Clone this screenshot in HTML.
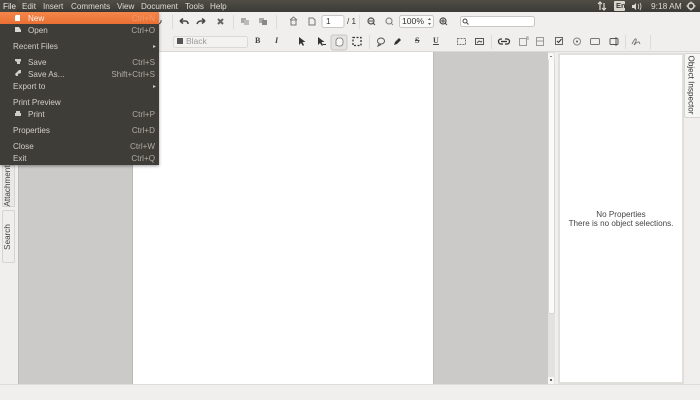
<!DOCTYPE html>
<html><head><meta charset="utf-8"><style>
html,body{margin:0;padding:0;background:#f0efed}
#r{position:relative;width:700px;height:400px;overflow:hidden;background:#f0efed;font-family:"Liberation Sans",sans-serif;font-size:8.1px;filter:blur(.35px)}
.a{position:absolute}
.t{position:absolute;white-space:nowrap;line-height:14px;height:14px}
.top{color:#dedbd3;top:0}
.m{color:#d2cfc7;left:13px}
.i{left:28px}
.k{color:#aeaba3;right:545px}
svg{position:absolute;left:0;top:0}
.sep{position:absolute;width:1px;height:14px;background:#dcdbd8}
</style></head><body><div id="r">
<div class="a" style="left:0;top:0;width:700px;height:12px;background:linear-gradient(#504d46,#3c3b37)"></div>
<div class="a" style="left:0;top:12px;width:700px;height:40px;background:#f0efed"></div>
<div class="a" style="left:0;top:51px;width:700px;height:1px;background:#dad9d6"></div>

<div class="a" style="left:18px;top:52px;width:530px;height:332px;background:#cbcac8"></div>
<div class="a" style="left:18px;top:52px;width:1px;height:332px;background:#bdbcba"></div>
<div class="a" style="left:133px;top:52px;width:300px;height:332px;background:#fff"></div>
<div class="a" style="left:132px;top:52px;width:1px;height:332px;background:#b9b8b6"></div>
<div class="a" style="left:433px;top:52px;width:1px;height:332px;background:#bdbcba"></div>

<div class="a" style="left:548px;top:52px;width:7px;height:332px;background:#e3e2e0"></div>
<div class="a" style="left:548px;top:53px;width:6px;height:7px;background:#f7f7f6;border-radius:2px"></div>
<div class="a" style="left:548px;top:60px;width:5px;height:253px;background:#fafaf9;border:1px solid #d8d7d5;border-top:0;border-radius:0 0 2px 2px;box-sizing:content-box"></div>
<div class="a" style="left:548px;top:377px;width:6px;height:7px;background:#f7f7f6"></div>
<div class="a" style="left:550px;top:379px;width:2px;height:2px;background:#666"></div>
<div class="a" style="left:550px;top:56px;width:2px;height:1px;background:#888"></div>

<div class="a" style="left:558px;top:53px;width:126px;height:331px;box-sizing:border-box;background:#fff;border:2px solid #e0dfdc"></div>
<div class="t" style="left:558px;width:126px;text-align:center;top:208px;color:#444;font-size:8.1px">No Properties</div>
<div class="t" style="left:558px;width:126px;text-align:center;top:217px;color:#444;font-size:8.1px">There is no object selections.</div>

<div class="a" style="left:684px;top:53px;width:16px;height:65px;background:#f6f6f5;border:1px solid #d5d4d1;border-right:0;box-sizing:border-box;border-radius:2px 0 0 2px"></div>
<div class="t" style="left:658px;top:78px;width:65px;text-align:center;transform:rotate(90deg);color:#333;font-size:8.1px">Object Inspector</div>

<div class="a" style="left:2px;top:165px;width:13px;height:42px;background:#e9e8e6;border:1px solid #d5d4d1;box-sizing:border-box"></div>
<div class="t" style="left:-17px;top:179px;width:50px;text-align:center;transform:rotate(-90deg);color:#444;font-size:8.1px">Attachment</div>
<div class="a" style="left:2px;top:210px;width:13px;height:53px;background:#efeeec;border:1px solid #d5d4d1;box-sizing:border-box;border-radius:2px"></div>
<div class="t" style="left:-12px;top:230px;width:40px;text-align:center;transform:rotate(-90deg);color:#444;font-size:8.1px">Search</div>

<div class="a" style="left:0;top:384px;width:700px;height:1px;background:#dddcd9"></div>

<!-- toolbar icons -->
<svg width="700" height="400" viewBox="0 0 700 400">
<rect x="322" y="15.500" width="22" height="12" rx="2" fill="#fff" stroke="#c8c7c4"/>
<rect x="399.500" y="15.500" width="34" height="12" rx="2" fill="#fafaf9" stroke="#c8c7c4"/>
<rect x="460.500" y="16.500" width="74" height="10" rx="2" fill="#fff" stroke="#c8c7c4"/>
<g fill="none" stroke="#4a4a48" stroke-width="1.6">
<path d="M180 21l3-2.500M180 21l3 2.500M180 21h5q3 0 3 3"/>
<path d="M205 21l-3-2.500M205 21l-3 2.500M205 21h-4q-3 0-4 3"/>
<path d="M218 19l5 5M223 19l-5 5" stroke-width="2" stroke="#666"/>
<path d="M161 20a3 3 0 1 1-2-2" stroke-width="1"/>
<rect x="291" y="20" width="5" height="5" stroke-width="1" stroke="#777"/>
<path d="M290 20l3.500-3 3.500 3" stroke-width="1" stroke="#777"/>
<path d="M309 18h4l2 2v5h-6z" stroke-width="1" stroke="#777"/>
<circle cx="371" cy="21" r="3" stroke-width="1.2"/><path d="M369 21h4M373 23l2 2" stroke-width="1"/>
<circle cx="389" cy="21" r="3" stroke="#888" stroke-width="1.2"/><path d="M391 23l2 2" stroke="#888" stroke-width="1"/>
<circle cx="443" cy="21" r="3" stroke-width="1.2"/><path d="M441 21h4M443 19v4M445 23l2 2" stroke-width="1"/>
<circle cx="465" cy="21" r="2" stroke-width="1"/><path d="M466.500 22.500l2 2" stroke-width="1"/>
</g>
<g fill="#aaa"><rect x="241" y="18" width="5" height="5"/><rect x="244" y="20" width="5" height="5" fill="#bbb"/><rect x="259" y="18" width="5" height="5"/><rect x="262" y="20" width="5" height="5" fill="#888"/></g>
<path d="M428 20l1.500-2 1.500 2zM428 23l1.500 2 1.500-2z" fill="#555"/>

<rect x="173.500" y="36.500" width="74" height="11" rx="2" fill="#f3f2f1" stroke="#dad9d6"/>
<rect x="177" y="38" width="6" height="6" fill="#555"/>
<rect x="331" y="35" width="16" height="15" rx="2" fill="#e4e3e1" stroke="#c8c7c4"/>
<path d="M336 45v-4q0-2 2-3h3q2 1 2 3v2q0 2-2 3h-3z" fill="#f7f7f6" stroke="#777" stroke-width=".8"/>
<g fill="#333">
<path d="M299 37l0 8 2-2 2 3 1-1-1.500-3h3z"/>
<path d="M318 37l0 8 2-2 2 3 1-1-1.500-3h3z"/><rect x="323" y="44" width="3" height="1"/>
</g>
<rect x="353" y="37.500" width="8" height="8" fill="none" stroke="#333" stroke-width="1.300" stroke-dasharray="2 1.500"/>
<g fill="none" stroke="#555" stroke-width="1">
<ellipse cx="381" cy="41" rx="3.500" ry="3"/>
<path d="M379 44l-1 2 3-1.500"/>
<rect x="457.500" y="38.500" width="8" height="6" stroke="#777" stroke-dasharray="2 1"/>
<rect x="475.500" y="38.500" width="8" height="6"/>
<path d="M477 43l2-2 2 1 1-1"/>
<path d="M502 39h-1a2.500 2.500 0 0 0 0 5h2M505 39h2a2.500 2.500 0 0 1 0 5h-2M501 41.500h6" stroke="#333" stroke-width="1.300"/>
<rect x="519.500" y="38.500" width="7" height="7" stroke="#999"/><path d="M526 37h2v3" stroke="#999"/>
<rect x="536.500" y="37.500" width="7" height="8" stroke="#999"/><path d="M537 41h6" stroke="#999"/>
<rect x="555.500" y="37.500" width="7" height="7" stroke="#666"/><path d="M557 41l1.500 1.500 3-3.500" stroke="#333"/>
<circle cx="577" cy="41.500" r="3.500" stroke="#888"/>
<rect x="590.500" y="38.500" width="9" height="6" rx="1" stroke="#777"/>
<rect x="610" y="38.500" width="8" height="6" rx="1" stroke="#555"/><path d="M616 37v9" stroke="#555"/>
</g>
<circle cx="577" cy="41.500" r="1" fill="#555"/>
<path d="M394 45l1-3 4-4 2 2-4 4z" fill="#333"/>
<path d="M632 44q3-6 4-5t-2 6q4-4 5-3l1 2" fill="none" stroke="#777" stroke-width="1"/>
<!-- panel indicators -->
<g stroke="#ddd9d0" fill="#ddd9d0">
<path d="M600 2v8M598 4l2-2 2 2" fill="none" stroke-width="1.200"/>
<path d="M604 10v-7M602 8l2 2 2-2" fill="none" stroke-width="1.200"/>
<path d="M632 5h2l2-2v7l-2-2h-2z" stroke="none"/>
<path d="M638 4q1.500 2.500 0 5M640 3q2 3.500 0 7" fill="none" stroke-width=".8"/>
<circle cx="691" cy="6" r="3" fill="none" stroke-width="1.500"/>
<path d="M691 1.500v1.500M691 9v1.500M686.500 6H688M694 6h1.500" fill="none" stroke-width="1.200"/>
</g>
<rect x="614" y="1" width="11" height="10" rx="1" fill="#d9d6ce"/>
</svg>

<div class="sep" style="left:172px;top:15px"></div>
<div class="sep" style="left:233px;top:15px"></div>
<div class="sep" style="left:276px;top:15px"></div>
<div class="sep" style="left:359px;top:15px"></div>
<div class="sep" style="left:369px;top:35px"></div>
<div class="sep" style="left:491px;top:35px"></div>
<div class="sep" style="left:625px;top:35px"></div>
<div class="sep" style="left:650px;top:35px"></div>

<div class="t" style="left:326px;top:15px;color:#333">1</div>
<div class="t" style="left:347px;top:15px;color:#333">/ 1</div>
<div class="t" style="left:402px;top:14px;color:#333;font-size:8.6px">100%</div>
<div class="t" style="left:186px;top:34px;color:#999;font-size:8.5px">Black</div>
<div class="t" style="left:255px;top:34px;color:#444;font-family:'Liberation Serif',serif;font-weight:bold">B</div>
<div class="t" style="left:275px;top:34px;color:#444;font-family:'Liberation Serif',serif;font-style:italic;font-weight:bold">I</div>
<div class="t" style="left:415px;top:34px;color:#444;font-family:'Liberation Serif',serif;font-weight:bold;text-decoration:line-through">S</div>
<div class="t" style="left:433px;top:34px;color:#444;font-family:'Liberation Serif',serif;font-weight:bold;text-decoration:underline">U</div>

<!-- panel text -->
<div class="t top" style="left:22px">Edit</div>
<div class="t top" style="left:43px">Insert</div>
<div class="t top" style="left:71px">Comments</div>
<div class="t top" style="left:117px">View</div>
<div class="t top" style="left:141px">Document</div>
<div class="t top" style="left:185px">Tools</div>
<div class="t top" style="left:210px">Help</div>
<div class="t" style="left:616px;top:-1px;color:#3c3b37;font-weight:bold;font-size:7.5px">En</div>
<div class="t" style="left:651px;top:-1px;color:#dedbd3;font-size:8.4px">9:18 AM</div>

<!-- menu -->
<div class="a" style="left:0;top:12px;width:159px;height:153px;background:#3f3d38;box-shadow:0 1px 3px rgba(0,0,0,.4)"></div>
<div class="a" style="left:0;top:12px;width:159px;height:12px;background:linear-gradient(#f4864a,#ea6f33)"></div>
<div class="a" style="left:0;top:0;width:17px;height:12px;background:#46443f"></div>
<div class="t top" style="left:3px;color:#ece9e2">File</div>
<div class="t" style="left:28px;top:12px;color:#fff3ea">New</div>
<div class="t k" style="top:12px;color:#f09a6c">Ctrl+N</div>
<div class="t m i" style="top:24px">Open</div><div class="t k" style="top:24px">Ctrl+O</div>
<div class="t m" style="top:40px">Recent Files</div>
<div class="t m i" style="top:56px">Save</div><div class="t k" style="top:56px">Ctrl+S</div>
<div class="t m i" style="top:68px">Save As...</div><div class="t k" style="top:68px">Shift+Ctrl+S</div>
<div class="t m" style="top:80px">Export to</div>
<div class="t m" style="top:96px">Print Preview</div>
<div class="t m i" style="top:108px">Print</div><div class="t k" style="top:108px">Ctrl+P</div>
<div class="t m" style="top:124px">Properties</div><div class="t k" style="top:124px">Ctrl+D</div>
<div class="t m" style="top:140px">Close</div><div class="t k" style="top:140px">Ctrl+W</div>
<div class="t m" style="top:152px">Exit</div><div class="t k" style="top:152px">Ctrl+Q</div>
<svg width="700" height="400" viewBox="0 0 700 400">
<path d="M16 15h4v6h-5v-5z" fill="#fff"/>
<path d="M15 27h4l2 3v2h-6z" fill="#d9d7d2"/>
<path d="M15 59h6v2l-1 1v2h-3v-2l-2-1z" fill="#cfcdc8"/>
<path d="M15 74l3-3 1-1h2v3l-3 1v2h-2z" fill="#cfcdc8"/>
<path d="M15 113h6v3h-6zM16 111h4v2h-4z" fill="#cfcdc8"/>
<path d="M153 45l3 1.500-3 1.500zM153 85l3 1.500-3 1.500z" fill="#c9c6be"/>
</svg>
</div></body></html>
